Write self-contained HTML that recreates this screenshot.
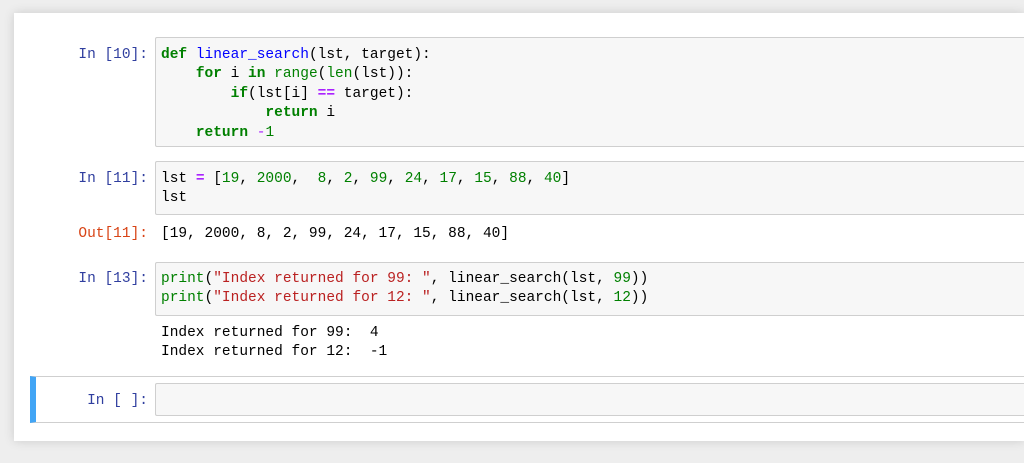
<!DOCTYPE html>
<html><head><style>
body{margin:0;width:1024px;height:463px;background:#eeeeee;overflow:hidden;position:relative;font-family:"Liberation Mono",monospace;font-size:14.5px;}
.panel{position:absolute;left:14px;top:13px;width:1010px;height:428px;background:#fff;box-shadow:0 0 10px rgba(0,0,0,0.15);}
.box{position:absolute;left:155px;right:0;background:#f7f7f7;border:1px solid #cfcfcf;border-right:none;border-radius:2px 0 0 2px;box-sizing:border-box;}
.t{position:absolute;white-space:pre;line-height:19.4px;color:#000;}
.p{position:absolute;right:876px;white-space:pre;line-height:19.4px;color:#303F9F;text-align:right;}
.o{color:#D84315;}
.k{color:#008000;font-weight:bold}
.f{color:#0000FF}
.b{color:#008000}
.n{color:#008000}
.op{color:#AA22FF;font-weight:bold}
.s{color:#BA2121}
</style></head><body>
<div class="panel"></div>
<div class="box" style="top:37px;height:110px"></div>
<div class="p" style="top:46px">In [10]:</div>
<div class="t" style="left:161px;top:46px"><span class="k">def</span> <span class="f">linear_search</span>(lst, target):
    <span class="k">for</span> i <span class="k">in</span> <span class="b">range</span>(<span class="b">len</span>(lst)):
        <span class="k">if</span>(lst[i] <span class="op">==</span> target):
            <span class="k">return</span> i
    <span class="k">return</span> <span class="op" style="font-weight:normal">-</span><span class="n">1</span></div>

<div class="box" style="top:161px;height:54px"></div>
<div class="p" style="top:170px">In [11]:</div>
<div class="t" style="left:161px;top:170px">lst <span class="op">=</span> [<span class="n">19</span>, <span class="n">2000</span>,  <span class="n">8</span>, <span class="n">2</span>, <span class="n">99</span>, <span class="n">24</span>, <span class="n">17</span>, <span class="n">15</span>, <span class="n">88</span>, <span class="n">40</span>]
lst</div>
<div class="p o" style="top:225px">Out[11]:</div>
<div class="t" style="left:161px;top:225px">[19, 2000, 8, 2, 99, 24, 17, 15, 88, 40]</div>

<div class="box" style="top:262px;height:54px"></div>
<div class="p" style="top:270px">In [13]:</div>
<div class="t" style="left:161px;top:270px"><span class="b">print</span>(<span class="s">"Index returned for 99: "</span>, linear_search(lst, <span class="n">99</span>))
<span class="b">print</span>(<span class="s">"Index returned for 12: "</span>, linear_search(lst, <span class="n">12</span>))</div>
<div class="t" style="left:161px;top:324px">Index returned for 99:  4
Index returned for 12:  -1</div>

<div style="position:absolute;left:30px;top:376px;right:0;height:47px;border:1px solid #cfcfcf;border-right:none;border-left:6px solid #42A5F5;box-sizing:border-box;"></div>
<div class="box" style="top:383px;height:33px"></div>
<div class="p" style="top:392px">In [ ]:</div>
</body></html>
